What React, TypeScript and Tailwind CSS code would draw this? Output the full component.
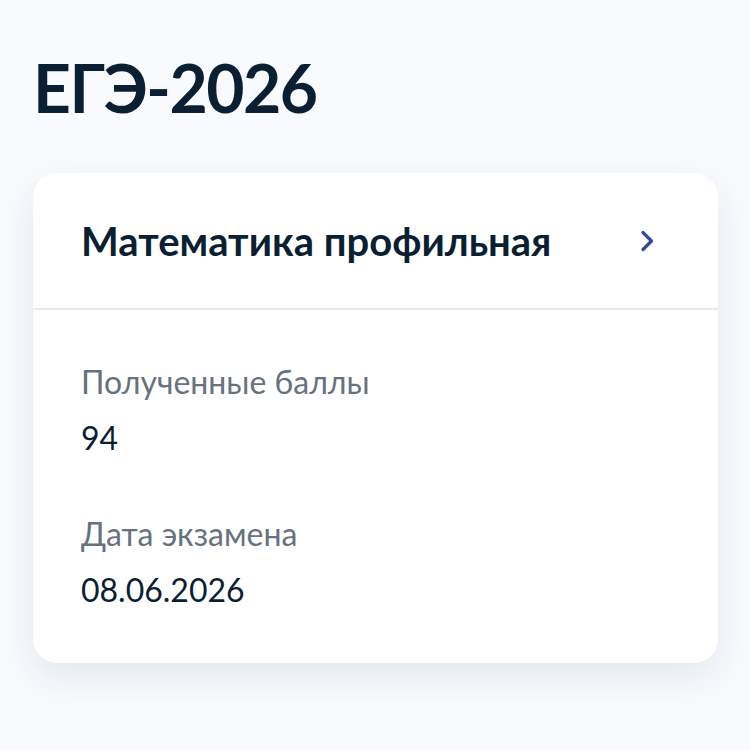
import React from 'react';

interface ExamResult {
  subject: string;
  score: number;
  date: string;
}

const exam: ExamResult = {
  subject: 'Математика профильная',
  score: 94,
  date: '08.06.2026',
};

const Field: React.FC<{ label: string; value: string }> = ({ label, value }) => (
  <div className="flex flex-col">
    <p className="text-[32px] leading-[40px] text-[#66727f]">{label}</p>
    <p className="mt-[16px] text-[32px] leading-[40px] text-[#0b1f33]">{value}</p>
  </div>
);

export default function App() {
  return (
    <div
      className="min-h-[750px] w-[750px] bg-[#f8fafd] px-[33px] pt-[48px]"
      style={{ fontFamily: 'Lato, "Noto Sans", sans-serif' }}
    >
      <h1 className="text-[66px] font-bold leading-[80px] tracking-[-1.5px] text-[#0b1f33]">ЕГЭ-2026</h1>

      <div className="mt-[45px] w-[685px] rounded-[24px] bg-white shadow-[0_14px_36px_rgba(26,46,90,0.09)]">
        {/* card header */}
        <div className="flex h-[137px] items-center justify-between border-b-2 border-[#e6ebf0] pl-[48px] pr-[64px]">
          <h2 className="text-[40px] font-bold text-[#0b1f33]">{exam.subject}</h2>
          <svg width="14" height="22" viewBox="0 0 14 22" fill="none">
            <path d="M3 2.5l8.5 8.5-8.5 8.5" stroke="#34489e" strokeWidth="3.2" strokeLinecap="round" strokeLinejoin="round" />
          </svg>
        </div>

        {/* details */}
        <div className="flex flex-col gap-[56px] px-[48px] pb-[53px] pt-[52px]">
          <Field label="Полученные баллы" value={String(exam.score)} />
          <Field label="Дата экзамена" value={exam.date} />
        </div>
      </div>
    </div>
  );
}
